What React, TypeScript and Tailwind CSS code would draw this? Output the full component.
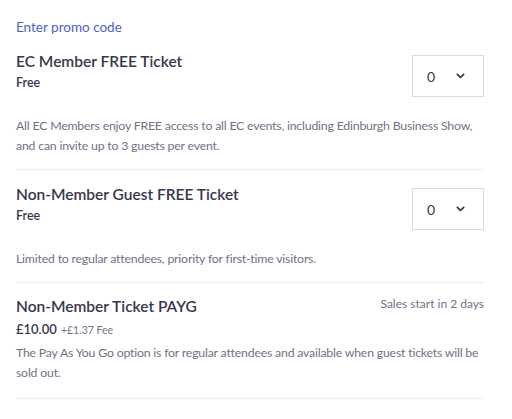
import React from 'react';

const font = { fontFamily: 'Lato, "Noto Sans", sans-serif' };

const Qty: React.FC = () => (
  <div className="mt-[6px] flex h-[42px] w-[72px] shrink-0 items-center justify-between border border-[#dbdae3] bg-white pl-[14px] pr-[18px] text-[14px] text-[#39364f]">
    <span>0</span>
    <svg width="9" height="6" viewBox="0 0 9 6" fill="none">
      <path d="M1.3 1.3 4.5 4.4 7.7 1.3" stroke="#39364f" strokeWidth="1.7" strokeLinecap="round" strokeLinejoin="round" />
    </svg>
  </div>
);

const title = 'text-[15.5px] font-semibold leading-6 text-[#39364f]';
const desc = 'text-[12.3px] leading-5 tracking-[-0.2px] text-[#6f7287]';

export default function App() {
  return (
    <div className="min-h-screen bg-white pl-4 pr-7 antialiased" style={font}>
      <div className="pt-[18px] text-[13.5px] leading-[18px] text-[#4b5fd6]">Enter promo code</div>

      {/* EC member */}
      <section className="mt-[13px] border-b border-[#eeedf2] pb-[13px]">
        <div className="flex items-start justify-between">
          <div>
            <h3 className={title}>EC Member FREE Ticket</h3>
            <p className="text-[12.5px] font-semibold leading-5 text-[#39364f]">Free</p>
          </div>
          <Qty />
        </div>
        <p className={`mt-[19px] ${desc}`}>
          All EC Members enjoy FREE access to all EC events, including Edinburgh Business Show, and can invite up to 3 guests per event.
        </p>
      </section>

      {/* Guest */}
      <section className="border-b border-[#eeedf2] pb-[13px] pt-[12px]">
        <div className="flex items-start justify-between">
          <div>
            <h3 className={title}>Non-Member Guest FREE Ticket</h3>
            <p className="text-[12.5px] font-semibold leading-5 text-[#39364f]">Free</p>
          </div>
          <Qty />
        </div>
        <p className={`mt-[19px] ${desc}`}>
          Limited to regular attendees, priority for first-time visitors.
        </p>
      </section>

      {/* PAYG */}
      <section className="border-b border-[#eeedf2] pb-[15px] pt-[11px]">
        <div className="flex items-start justify-between">
          <h3 className={title}>Non-Member Ticket PAYG</h3>
          <span className="text-[12px] leading-5 text-[#6f7287]">Sales start in 2 days</span>
        </div>
        <p className="leading-5 text-[#39364f]">
          <span className="text-[13px] font-semibold">£10.00</span>{' '}
          <span className="text-[10.5px] text-[#6f7287]">+£1.37 Fee</span>
        </p>
        <p className={`mt-[3px] ${desc}`}>
          The Pay As You Go option is for regular attendees and available when guest tickets will be sold out.
        </p>
      </section>
    </div>
  );
}
